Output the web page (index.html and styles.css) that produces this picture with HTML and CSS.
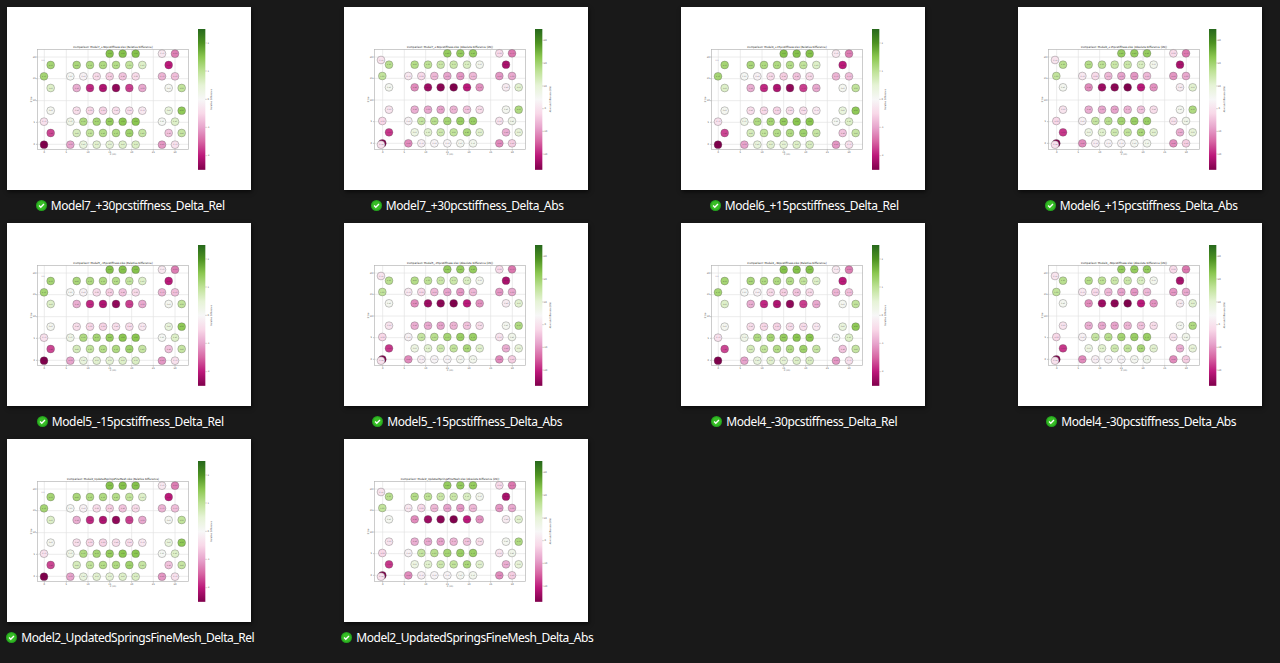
FILE: index.html
```html
<!DOCTYPE html>
<html lang="en">
<head>
<meta charset="utf-8">
<title>Pictures</title>
<link rel="stylesheet" href="styles.css">
</head>
<body>
<main class="files" id="files"></main>
<script src="app.js"></script>
</body>
</html>
```
FILE: styles.css
```css
* { box-sizing: border-box; }
body { margin: 0; height: 663px; overflow: hidden; background: #191919; color: #fff; font-family: "Noto Sans", "Open Sans", sans-serif; }
.files { display: grid; grid-template-columns: repeat(4, 244px); column-gap: 93px; grid-auto-rows: 216px; padding: 7px 0 0 7px; }
.file { display: flex; flex-direction: column; align-items: center; margin: 0; }
.thumb { display: block; width: 244px; height: 183px; background: #fff; box-shadow: 1px 2px 4px rgba(0, 0, 0, .6); }
.label { display: flex; align-items: center; gap: 4px; height: 17px; margin-top: 7px; padding-left: 2.4px; font-size: 12px; line-height: 17px; white-space: nowrap; }
.name { display: block; }
.check { width: 11px; height: 11px; flex: none; }
.frame { fill: none; stroke: #b4b4b4; stroke-width: 2; }
.grid { stroke: #e2e2e2; stroke-width: 2; fill: none; }
.tick { stroke: #aaa; stroke-width: 2; }
.dot { stroke: #555; stroke-opacity: .62; stroke-width: 1.6; }
.plot text { font-family: "DejaVu Sans", sans-serif; fill: #555; font-size: 7px; text-anchor: middle; }
.plot .title { fill: #111; font-size: 8.5px; }
.plot .value { fill: #333; fill-opacity: .85; font-size: 5.5px; }
```
FILE: app.js
```js
const files = [
  ['Model7_+30pcstiffness_Delta_Rel', 174], ['Model7_+30pcstiffness_Delta_Abs', 178],
  ['Model6_+15pcstiffness_Delta_Rel', 174], ['Model6_+15pcstiffness_Delta_Abs', 178],
  ['Model5_-15pcstiffness_Delta_Rel', 172], ['Model5_-15pcstiffness_Delta_Abs', 175],
  ['Model4_-30pcstiffness_Delta_Rel', 171], ['Model4_-30pcstiffness_Delta_Abs', 175],
  ['Model2_UpdatedSpringsFineMesh_Delta_Rel', 233], ['Model2_UpdatedSpringsFineMesh_Delta_Abs', 237]
];
const scale = ['#80004c', '#bc187a', '#d765a3', '#e7a4cc', '#f8d8e8', '#f7f7f7', '#e6f3d6', '#bee296', '#8bc750', '#4d9221', '#27681c'];
const odd = [152, 230, 270, 309, 348, 388, 427, 506, 545];
const even = [132, 211, 250, 290, 329, 368, 407, 486, 525];

// One row per line of sensors: y, x positions, then a 0-10 level for each position.
const rel = [
  [161, even, [null, null, null, null, 8.1, 8.1, 8.1, 4.5, 2.4]],
  [195, odd, [7.5, 7.4, 7.3, 7.3, 7.2, 6.9, 6.2, 1, null]],
  [229, even, [7.5, 5.1, 4.8, 4.1, 3.8, 3.6, 4.1, 3.3, 3.5]],
  [264, odd, [6.2, 3.2, 1.2, .8, .3, 1.5, 3.1, 5.2, 6.9]],
  [332, odd, [5.2, 4.2, 4, 3.9, 4.2, 4.2, 4.5, 5.8, 7.9]],
  [365, even, [4.3, 5.5, 7.3, 7.5, 7.8, 8, 8, 5.1, 6.2]],
  [399, odd, [1.6, 6.4, 6.9, 7.2, 7.3, 7.6, 6.8, 3.6, 6.8]],
  [434, even, [0, 3, 5.8, 6.1, 6, 6.2, 6.3, 2.8, 4.3]]
];
const abs = [
  [160, even, [null, null, null, null, 7.8, 7.8, 7.8, 4.1, 2.3]],
  [194, odd, [7.1, 7.2, 7, 6.7, 6.7, 6.3, 5.3, .7, null]],
  [228, even, [6.9, 4.5, 4.1, 3.4, 3, 2.8, 3.4, 2.8, 3.1]],
  [262, odd, [5.2, 2.6, .5, .2, 0, 1, 2.7, 4.6, 6.1]],
  [329, odd, [4.4, 3.2, 3.1, 3, 3.3, 3.6, 4.2, 5.2, 7.3]],
  [363, even, [4, 4.8, 6.8, 7.1, 7.5, 7.7, 7.7, 4.4, 5.4]],
  [397, odd, [1.4, 5.6, 6.1, 6.6, 6.9, 7.4, 6.1, 3.2, 5.9]],
  [430, even, [0, 2.6, 4.7, 4.9, 4.9, 5.2, 5.3, 2.6, 3.8]]
];

function color(level) {
  const i = Math.min(9, Math.floor(level));
  const part = (hex, k) => parseInt(hex.substr(1 + 2 * k, 2), 16);
  return 'rgb(' + [0, 1, 2].map(k => Math.round(part(scale[i], k) + (part(scale[i + 1], k) - part(scale[i], k)) * (level - i))) + ')';
}
function dot(x, y, level, label) {
  return `<circle class="dot" cx="${x}" cy="${y}" r="11.7" fill="${color(level)}"/><text class="value" x="${x}" y="${y + 2}">${label}</text>`;
}
function plot(name, n) {
  const isAbs = name.endsWith('Abs');
  const xs = isAbs ? [137, 202, 266, 331, 396, 461, 526] : [133, 199, 264, 329, 395, 460, 525];
  const ys = isAbs ? [171, 235, 300, 365, 430] : [171, 236, 302, 367, 433];
  let s = '<path class="grid" d="' + xs.map(x => `M${x} 148V448`).join('') + ys.map(y => `M112 ${y}H566`).join('') + '"/>';
  s += '<rect class="frame" x="112.5" y="148.5" width="453" height="299.5"/>';
  xs.forEach((x, i) => { s += `<path class="tick" d="M${x} 448v4"/><text x="${x}" y="458">${i * 5}</text>`; });
  ys.forEach((y, i) => { s += `<path class="tick" d="M108 ${y}h4"/><text x="103" y="${y + 2}">${20 - i * 5}</text>`; });
  (isAbs ? abs : rel).forEach(([y, cols, levels]) => levels.forEach((v, i) => {
    if (v === null) return;
    const shift = isAbs ? [4, 3, 3, 2, 2, 2, 1, 1, 0][i] : 0;
    s += dot(cols[i] + shift, y, v, (v - 5).toFixed(2));
  }));
  if (isAbs) s += dot(132, 180, 4.4, '-0.31') + dot(132, 434, 4.3, '-0.34');
  else s += '<text class="value" x="129" y="182">0.0</text>';
  const long = name.startsWith('Model2');
  const span = long ? (isAbs ? 295 : 276) : (isAbs ? 258 : 238);
  s += `<text class="title" x="339" y="145" textLength="${span}" lengthAdjust="spacingAndGlyphs">Comparison: ${name.split('_Delta')[0]}.xlsx (${isAbs ? 'Absolute Difference (kN)' : 'Relative Difference'})</text>`;
  s += '<text x="339" y="466">X (m)</text><text transform="translate(95 297) rotate(-90)">Z (m)</text>';
  s += `<defs><linearGradient id="g${n}" x1="0" y1="1" x2="0" y2="0">${scale.map((c, i) => `<stop offset="${i * 10}%" stop-color="${c}"/>`).join('')}</linearGradient></defs>`;
  s += `<rect x="594" y="87" width="22" height="422.5" fill="url(#g${n})"/>`;
  const bar = isAbs ? [121, 189, 258, 326, 394, 462] : [129, 213, 298, 382, 467];
  const top = isAbs ? 3 : 2;
  bar.forEach((y, i) => { s += `<path class="tick" d="M616 ${y}h4"/><text x="625" y="${y + 2}">${(top - i) * (isAbs ? 10 : 1)}</text>`; });
  s += `<text transform="translate(${isAbs ? 641 : 637} 298) rotate(-90)" textLength="${isAbs ? 78 : 62}" lengthAdjust="spacingAndGlyphs">${isAbs ? 'Absolute Difference (kN)' : 'Relative Difference'}</text>`;
  return `<svg class="thumb plot" viewBox="21 21 732 549">${s}</svg>`;
}
const check = '<svg class="check" viewBox="0 0 12 12"><circle cx="6" cy="6" r="6" fill="#24a51e"/><circle cx="6" cy="6" r="4.7" fill="#38bd26"/><path d="M3.4 6.1 5.2 7.9 8.7 4.3" fill="none" stroke="#fff" stroke-width="1.5"/></svg>';
const host = document.getElementById('files');
host.innerHTML = files.map(([name], n) => `<figure class="file">${plot(name, n)}<figcaption class="label">${check}<span class="name">${name}</span></figcaption></figure>`).join('');
host.querySelectorAll('.name').forEach((el, i) => {
  const gap = (files[i][1] - el.getBoundingClientRect().width) / files[i][0].length;
  el.style.letterSpacing = gap + 'px';
});
```
